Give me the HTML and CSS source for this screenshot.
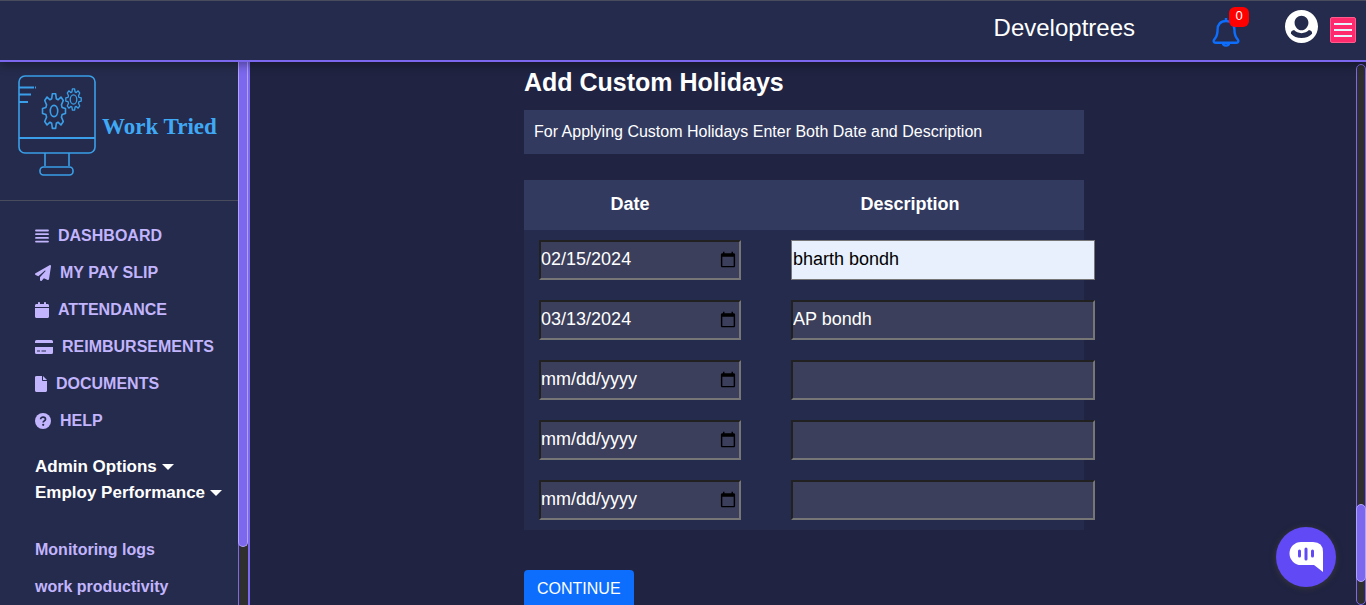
FILE: index.html
```html
<!DOCTYPE html>
<html lang="en">
<head>
<meta charset="utf-8">
<title>Work Tried - Custom Holidays</title>
<link rel="stylesheet" href="styles.css">
</head>
<body>
<header class="topbar">
  <span class="company">Developtrees</span>
  <button class="icon-btn bell" type="button" aria-label="Notifications">
    <svg width="28" height="31" viewBox="0 0 28 31" fill="none" stroke="#0d6efd" stroke-width="2.4" stroke-linejoin="round"><path d="M14 4C8.500 4 5.600 7.500 5.600 12.500C5.600 18 4.300 20.500 2 22.800C1.200 24 1.800 25.800 3.400 25.800H24.600C26.200 25.800 26.800 24 26 22.800C23.700 20.500 22.400 18 22.400 12.500C22.400 7.500 19.500 4 14 4Z"/><path d="M14 1V4M11 26C11 29.500 17 29.500 17 26"/></svg>
    <span class="badge">0</span>
  </button>
  <button class="icon-btn account" type="button" aria-label="Account">
    <svg width="33" height="33" viewBox="0 8 496 496" fill="#fff"><path d="M248 8C111 8 0 119 0 256s111 248 248 248 248-111 248-248S385 8 248 8zm0 86c57 0 104 47 104 104s-47 114-104 114-104-57-104-114S191 94 248 94zm0 334c-64 0-124-22-158-64-6-24 12-48 46-54 26 28 66 46 112 46s86-18 112-46c34 6 52 30 46 54C372 406 312 428 248 428z"/></svg>
  </button>
  <button class="menu-btn" type="button" aria-label="Menu"><i></i><i></i><i></i></button>
</header>
<div class="shell">
  <aside class="sidebar">
    <div class="side-content">
      <a class="logo" href="#">
        <svg width="78" height="102" viewBox="0 0 78 102" fill="none" stroke="#3a9fe8" stroke-width="1.6" stroke-linejoin="round">
          <rect x="1" y="1" width="76" height="77" rx="6"/>
          <path d="M1 63H77" stroke-width="2"/>
          <path d="M1 12.500H16M17 12.500h1M1 19.500H13M1 27H10" stroke-width="2"/>
          <path d="M27 78V91M51 78V91" stroke-width="1.600"/>
          <rect x="22" y="92" width="33" height="8" rx="3.500"/>
          <g transform="translate(36 36) scale(1.160 1.750)"><path vector-effect="non-scaling-stroke" d="M-1.400-9.900H1.400L2-7L3.500-6.400L6-8L8-6L6.400-3.500L7-2L9.900-1.400V1.400L7 2L6.400 3.500L8 6L6 8L3.500 6.400L2 7L1.400 9.900H-1.400L-2 7L-3.500 6.400L-6 8L-8 6L-6.400 3.500L-7 2L-9.900 1.400V-1.400L-7-2L-6.400-3.500L-8-6L-6-8L-3.500-6.400L-2-7Z"/><circle vector-effect="non-scaling-stroke" r="3.200"/></g>
          <g transform="translate(55.500 24.500) scale(.780 1.080)" stroke-width="1.300"><path vector-effect="non-scaling-stroke" d="M-1.400-9.900H1.400L2-7L3.500-6.400L6-8L8-6L6.400-3.500L7-2L9.900-1.400V1.400L7 2L6.400 3.500L8 6L6 8L3.500 6.400L2 7L1.400 9.900H-1.400L-2 7L-3.500 6.400L-6 8L-8 6L-6.400 3.500L-7 2L-9.900 1.400V-1.400L-7-2L-6.400-3.500L-8-6L-6-8L-3.500-6.400L-2-7Z"/><circle vector-effect="non-scaling-stroke" r="4.200"/></g>
        </svg>
        <span>Work Tried</span>
      </a>
      <nav class="nav">
        <a href="#"><svg width="14" height="14" viewBox="0 0 14 14" stroke="currentColor" stroke-width="1.8" stroke-linecap="round"><path d="M1 1.500H13M1 5.200H13M1 8.900H13M1 12.600H13"/></svg>DASHBOARD</a>
        <a href="#"><svg width="16" height="16" viewBox="0 0 512 512"><path d="M498.100 5.600c10.100 7 15.400 19.100 13.500 31.200l-64 416c-1.500 9.700-7.400 18.200-16 23s-18.900 5.400-28 1.600L284 427.700l-68.500 74.100c-8.900 9.700-22.900 12.900-35.200 8.100S160 493.200 160 480V396.400c0-4 1.500-7.800 4.200-10.700L331.800 202.800c5.800-6.300 5.600-16-.4-22s-15.700-6.400-22-.7L106 360.800 17.700 316.600C7.100 311.300 .3 300.700 0 288.900s5.900-22.800 16.100-28.700l448-256c10.700-6.100 23.900-5.500 34 1.400z"/></svg>MY PAY SLIP</a>
        <a href="#"><svg width="14" height="16" viewBox="0 0 448 512"><path d="M96 32V64H48C21.500 64 0 85.500 0 112v48H448V112c0-26.500-21.500-48-48-48H352V32c0-17.700-14.300-32-32-32s-32 14.300-32 32V64H160V32c0-17.700-14.300-32-32-32S96 14.300 96 32zM448 192H0V464c0 26.500 21.500 48 48 48H400c26.500 0 48-21.500 48-48V192z"/></svg>ATTENDANCE</a>
        <a href="#"><svg width="18" height="14" viewBox="0 0 18 14"><path fill-rule="evenodd" d="M1.500 0H16.500Q18 0 18 1.500V3H0V1.500Q0 0 1.500 0ZM0 7H18V12.500Q18 14 16.500 14H1.500Q0 14 0 12.500ZM2 10.500V11.500H5V10.500ZM6.500 10.500V11.500H11V10.500Z"/></svg>REIMBURSEMENTS</a>
        <a href="#"><svg width="12" height="16" viewBox="0 0 384 512"><path d="M0 64C0 28.700 0 0 48 0H224V128c0 17.700 14.300 32 32 32H384V464c0 26.500-21.500 48-48 48H48c-26.500 0-48-21.500-48-48V64zm384 64H256V0L384 128z"/></svg>DOCUMENTS</a>
        <a href="#"><svg width="16" height="16" viewBox="0 0 16 16"><circle cx="8" cy="8" r="8"/><path d="M5.600 6.200C5.600 3.300 10.500 3.500 10.500 6.200C10.500 7.900 8.200 7.900 8.200 9.500" fill="none" stroke="#252b4c" stroke-width="1.700"/><circle cx="8.200" cy="11.800" r="1.100" fill="#252b4c"/></svg>HELP</a>
      </nav>
      <div class="groups">
        <button type="button">Admin Options <i class="caret"></i></button>
        <button type="button">Employ Performance <i class="caret"></i></button>
      </div>
      <nav class="nav">
        <a href="#">Monitoring logs</a>
        <a href="#">work productivity</a>
      </nav>
    </div>
    <div class="scroll-track side-scroll"><div class="scroll-thumb"></div></div>
  </aside>
  <main class="page">
    <form class="holidays">
      <h1>Add Custom Holidays</h1>
      <p class="note">For Applying Custom Holidays Enter Both Date and Description</p>
      <table>
        <thead><tr><th class="col-date" scope="col">Date</th><th scope="col">Description</th></tr></thead>
        <tbody>
          <tr><td><input type="date" value="2024-02-15" aria-label="Date 1"></td><td class="desc"><input class="filled" type="text" value="bharth bondh" aria-label="Description 1"></td></tr>
          <tr><td><input type="date" value="2024-03-13" aria-label="Date 2"></td><td class="desc"><input type="text" value="AP bondh" aria-label="Description 2"></td></tr>
          <tr><td><input type="date" aria-label="Date 3"></td><td class="desc"><input type="text" aria-label="Description 3"></td></tr>
          <tr><td><input type="date" aria-label="Date 4"></td><td class="desc"><input type="text" aria-label="Description 4"></td></tr>
          <tr><td><input type="date" aria-label="Date 5"></td><td class="desc"><input type="text" aria-label="Description 5"></td></tr>
        </tbody>
      </table>
      <button class="continue" type="button">CONTINUE</button>
    </form>
  </main>
  <div class="scroll-track page-scroll"><div class="scroll-thumb"></div></div>
</div>
<button class="chat" type="button" aria-label="Open chat">
  <svg width="34" height="32" viewBox="0 0 34 32"><path d="M12 1H24Q34 1 34 11V31L25 24H12A11.500 11.500 0 0 1 12 1Z" fill="#fff"/><path d="M10.500 10V15M17 8V18M23.500 10V15" stroke="#6149f5" stroke-width="3" stroke-linecap="round"/></svg>
</button>
</body>
</html>
```
FILE: styles.css
```css
* { box-sizing: border-box; }

body {
  margin: 0;
  height: 100vh;
  overflow: hidden;
  display: flex;
  flex-direction: column;
  background: #202341;
  color: #fff;
  font-family: "Liberation Sans", Arial, sans-serif;
  font-size: 16px;
}

a { color: inherit; text-decoration: none; }
button { font: inherit; color: inherit; cursor: pointer; }

.topbar {
  position: relative;
  z-index: 2;
  flex: none;
  height: 62px;
  display: flex;
  align-items: flex-start;
  justify-content: flex-end;
  padding: 9px 10px 0 0;
  background: #252b4c;
  border-top: 1px solid #484c5c;
  border-bottom: 2px solid #7b68ee;
  box-shadow: 0 2px 10px rgba(0, 0, 0, 0.4);
}

.company {
  font-size: 24px;
  line-height: 36px;
  margin-right: 77px;
}

.icon-btn {
  position: relative;
  display: flex;
  padding: 0;
  border: 0;
  background: none;
}

.bell { margin: 7px 45px 0 0; }

.badge {
  position: absolute;
  top: -10px;
  right: -9px;
  width: 20px;
  height: 20px;
  border-radius: 6px;
  background: #f00;
  font-size: 13px;
  line-height: 18px;
  text-align: center;
}

.account { margin-right: 12px; }

.menu-btn {
  width: 26px;
  height: 26px;
  margin-top: 7px;
  padding: 0 3px;
  display: flex;
  flex-direction: column;
  justify-content: center;
  gap: 4px;
  border: 1px solid #ff5c8d;
  border-radius: 2px;
  background: #ff2a6d;
}

.menu-btn i { height: 2px; background: #e3f3ff; }

.shell { flex: 1; min-height: 0; display: flex; }

.sidebar {
  flex: none;
  width: 250px;
  display: flex;
  background: #252b4c;
  border-right: 2px solid #7b68ee;
}

.side-content { flex: 1; min-width: 0; overflow: hidden; }

.logo {
  display: flex;
  align-items: flex-start;
  gap: 6px;
  padding: 13px 0 23px 18px;
  border-bottom: 1px solid #484c5c;
  color: #3fa9f5;
  font-family: "Liberation Serif", serif;
  font-size: 23px;
  font-weight: bold;
  line-height: 104px;
  height: 139px;
  white-space: nowrap;
}

.logo svg { flex: none; }

.nav {
  padding: 16px 0 0 35px;
  color: #c2b5fd;
  font-weight: bold;
}

.nav a {
  display: flex;
  align-items: center;
  gap: 9px;
  height: 37px;
}

.nav svg { fill: currentColor; flex: none; }

.groups {
  display: flex;
  flex-direction: column;
  align-items: flex-start;
  padding: 15px 0 9px 35px;
}

.groups button {
  display: flex;
  align-items: center;
  gap: 5px;
  height: 26px;
  padding: 0;
  border: 0;
  background: none;
  font-size: 17px;
  font-weight: bold;
}

.caret {
  border: 6px solid transparent;
  border-top-color: #fff;
  border-bottom: 0;
}

.scroll-track {
  flex: none;
  width: 10px;
  display: flex;
  flex-direction: column;
  background: #302f2f;
  border: 1px solid #7b68ee;
}

.side-scroll { border-width: 0 0 0 1px; }

.scroll-thumb {
  margin: 0 -1px;
  background: #7b68ee;
  border: 1px solid #b0a3f8;
  border-radius: 5px;
}

.side-scroll .scroll-thumb {
  height: 89.4%;
  margin-right: 0;
  border-top: 0;
  border-radius: 0 0 5px 5px;
}

.page-scroll {
  margin-top: 2px;
  justify-content: flex-end;
  padding-bottom: 22px;
  border-radius: 5px;
}

.page-scroll .scroll-thumb { height: 78px; }

.page { flex: 1; min-width: 0; overflow: hidden; padding-left: 2px; }

.holidays { width: 560px; margin: 0 auto; }

h1 {
  margin: 0;
  padding-top: 4px;
  font-size: 25px;
  line-height: 32px;
}

.note {
  margin: 12px 0 26px;
  padding: 0 10px;
  background: #323a5f;
  line-height: 44px;
}

table {
  width: 100%;
  table-layout: fixed;
  border-collapse: collapse;
  background: #252b4c;
}

th {
  height: 50px;
  padding: 0 0 2px;
  background: #323a5f;
  font-size: 18px;
}

.col-date { width: 212px; }

td { height: 60px; padding: 0 0 0 15px; }
td.desc { padding-left: 55px; }

td input {
  display: block;
  width: 202px;
  height: 40px;
  padding: 0 0 1px;
  background: #3c3f5c;
  border: 2px inset #767676;
  color: #fff;
  font: 18px "Liberation Sans", Arial, sans-serif;
}

input::-webkit-datetime-edit,
input::-webkit-datetime-edit-fields-wrapper,
input::-webkit-datetime-edit-month-field,
input::-webkit-datetime-edit-day-field,
input::-webkit-datetime-edit-year-field { padding: 0; }

.desc input { width: 304px; }

.desc .filled {
  padding-left: 1px;
  background: #e8f0fe;
  border: 1px solid #767676;
  color: #000;
}

.continue {
  margin-top: 40px;
  padding: 0 13px;
  height: 38px;
  border: 0;
  border-radius: 4px;
  background: #0d6efd;
}

.chat {
  position: fixed;
  right: 30px;
  bottom: 18px;
  width: 60px;
  height: 60px;
  display: flex;
  align-items: center;
  justify-content: center;
  padding: 0;
  border: 0;
  border-radius: 50%;
  background: #6149f5;
  box-shadow: 0 1px 6px rgba(60, 60, 60, 0.9);
}
```
